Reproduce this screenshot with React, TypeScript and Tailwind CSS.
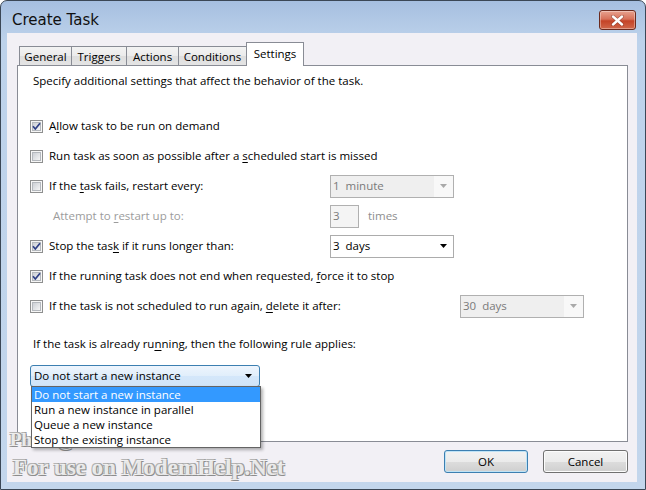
import React from "react";

function CheckBox({ checked = false }: { checked?: boolean }) {
  return (
    <svg width="13" height="13" viewBox="0 0 13 13" className="block shrink-0">
      <defs>
        <linearGradient id="cbg" x1="0" y1="0" x2="1" y2="1">
          <stop offset="0" stopColor="#c9cdd3" />
          <stop offset="1" stopColor="#f7f7f7" />
        </linearGradient>
      </defs>
      <rect x="0.5" y="0.5" width="12" height="12" fill="#f6f6f6" stroke="#8e8f8f" />
      <rect x="2.5" y="2.5" width="8" height="8" fill="url(#cbg)" stroke="#b4b8bd" />
      {checked && (
        <path d="M3 6.3 L5.3 9 L10 3.2" fill="none" stroke="#2e3f85" strokeWidth="1.7" strokeLinejoin="round" />
      )}
    </svg>
  );
}

function U({ children }: { children: React.ReactNode }) {
  return <span className="underline underline-offset-[2px]">{children}</span>;
}

function Arrow({ color }: { color: string }) {
  return (
    <svg width="7" height="4" viewBox="0 0 7 4" className="block">
      <path d="M0 0H7L3.5 4Z" fill={color} />
    </svg>
  );
}

function DisabledCombo({ value }: { value: string }) {
  return (
    <div className="flex h-[23px] w-[124px] shrink-0 border border-[#b0b0b0] bg-[#f8f8f8]">
      <div className="flex h-full w-[103px] items-center whitespace-pre bg-[#efefef] pl-[2px] text-[#7a7a7a]">{value}</div>
      <div className="flex flex-1 items-center justify-center">
        <Arrow color="#a9a9a9" />
      </div>
    </div>
  );
}

function Row({ children }: { children: React.ReactNode }) {
  return <div className="flex h-[30px] items-center pl-[12px]">{children}</div>;
}

export default function App() {
  return (
    <div className="h-[490px] w-[646px] overflow-hidden bg-white">
      <div className="relative flex h-[490px] w-[646px] flex-col rounded-t-[7px] border border-[#3b4756] bg-[linear-gradient(#a6bfe0,#bdd2eb_40px,#c3d6ec)] font-['Open_Sans','Noto_Sans',sans-serif] text-[11.5px] text-black">
        {/* title bar */}
        <div className="flex h-[32px] shrink-0 items-start justify-between pl-[11px] pr-[9px]">
          <div className="mt-[9px] font-['Comic_Sans_MS','DejaVu_Sans',sans-serif] text-[15px] leading-[20px] text-[#101010]">
            Create Task
          </div>
          <div className="mt-[9px] flex h-[20px] w-[37px] items-center justify-center rounded-[3px] border border-[#6b2a1e] bg-[linear-gradient(#e8a28f,#d7715a_45%,#c44327_55%,#d0674a)] shadow-[inset_0_0_0_1px_rgba(255,255,255,0.35)]">
            <svg width="13" height="11" viewBox="0 0 13 11">
              <path d="M2 1.5 L11 9.5 M11 1.5 L2 9.5" stroke="#5a1a10" strokeWidth="3.6" strokeLinecap="round" opacity="0.5" />
              <path d="M2 1.5 L11 9.5 M11 1.5 L2 9.5" stroke="#ffffff" strokeWidth="2.4" strokeLinecap="round" />
            </svg>
          </div>
        </div>

        {/* client area */}
        <div className="ml-[6px] flex h-[449px] w-[630px] shrink-0 flex-col bg-[#f2f0f5] pl-[10px] pt-[10px]">
          {/* tabs */}
          <div className="flex h-[22px] items-end pl-[2px]">
            <div className="flex h-[19px] w-[53px] items-center justify-center border border-b-0 border-[#898c95] bg-[linear-gradient(#f3f3f3,#ebebeb_50%,#dedede_50%,#e4e4e4)] pt-[1px]">General</div>
            <div className="-ml-px flex h-[19px] w-[56px] items-center justify-center border border-b-0 border-[#898c95] bg-[linear-gradient(#f3f3f3,#ebebeb_50%,#dedede_50%,#e4e4e4)] pt-[1px]">Triggers</div>
            <div className="-ml-px flex h-[19px] w-[53px] items-center justify-center border border-b-0 border-[#898c95] bg-[linear-gradient(#f3f3f3,#ebebeb_50%,#dedede_50%,#e4e4e4)] pt-[1px]">Actions</div>
            <div className="-ml-px flex h-[19px] w-[69px] items-center justify-center border border-b-0 border-[#898c95] bg-[linear-gradient(#f3f3f3,#ebebeb_50%,#dedede_50%,#e4e4e4)] pt-[1px]">Conditions</div>
            <div className="relative z-10 -mb-px -ml-px flex h-[24px] w-[58px] items-start justify-center border border-b-0 border-[#898c95] bg-white pt-[2px]">Settings</div>
          </div>

          {/* panel */}
          <div className="relative flex h-[377px] w-[611px] flex-col border border-[#898c95] bg-white">
            <div className="mt-[7px] h-[16px] pl-[15px] leading-[16px]">
              Specify additional settings that affect the behavior of the task.
            </div>

            <div className="mt-[22px] flex flex-col">
              <Row>
                <CheckBox checked />
                <span className="ml-[6px]">A<U>l</U>low task to be run on demand</span>
              </Row>
              <Row>
                <CheckBox />
                <span className="ml-[6px]">Run task as soon as possible after a <U>s</U>cheduled start is missed</span>
              </Row>
              <Row>
                <div className="flex w-[300px] items-center">
                  <CheckBox />
                  <span className="ml-[6px]">If the <U>t</U>ask fails, restart every:</span>
                </div>
                <DisabledCombo value="1  minute" />
              </Row>
              <Row>
                <div className="w-[300px] pl-[23px] text-[#9c9c9c]">
                  Attempt to <U>r</U>estart up to:
                </div>
                <div className="flex h-[23px] w-[29px] items-center border border-[#b0b0b0] bg-[#f4f4f4] pl-[2px] text-[#7a7a7a]">3</div>
                <span className="ml-[9px] text-[#8e8e8e]">times</span>
              </Row>
              <Row>
                <div className="flex w-[300px] items-center">
                  <CheckBox checked />
                  <span className="ml-[6px]">Stop the tas<U>k</U> if it runs longer than:</span>
                </div>
                <div className="flex h-[23px] w-[124px] items-center justify-between border border-[#acacac] bg-white pl-[2px] pr-[6px]">
                  <span className="whitespace-pre">3  days</span>
                  <Arrow color="#000000" />
                </div>
              </Row>
              <Row>
                <CheckBox checked />
                <span className="ml-[6px]">If the running task does not end when requested, <U>f</U>orce it to stop</span>
              </Row>
              <Row>
                <div className="flex w-[430px] items-center">
                  <CheckBox />
                  <span className="ml-[6px]">If the task is not scheduled to run again, <U>d</U>elete it after:</span>
                </div>
                <DisabledCombo value="30  days" />
              </Row>
            </div>

            <div className="mt-[15px] h-[16px] pl-[15px] leading-[16px]">
              If the task is already ru<U>n</U>ning, then the following rule applies:
            </div>

            <div className="relative ml-[12px] mt-[13px] w-[230px]">
              <div className="flex h-[22px] items-center justify-between rounded-[3px] border border-[#3c7fb1] bg-[linear-gradient(#eef5fd,#e0eefb_50%,#d4e7fa_50%,#d0e4f8)] pl-[3px] pr-[7px]">
                <span>Do not start a new instance</span>
                <Arrow color="#000000" />
              </div>
              <div className="absolute left-[1px] top-[21px] z-20 flex w-[230px] flex-col border border-[#646464] bg-white shadow-[2px_2px_3px_rgba(0,0,0,0.3)]">
                <div className="h-[15px] bg-[#3399ff] pl-[2px] leading-[15px] text-white">Do not start a new instance</div>
                <div className="h-[15px] pl-[2px] leading-[15px]">Run a new instance in parallel</div>
                <div className="h-[15px] pl-[2px] leading-[15px]">Queue a new instance</div>
                <div className="h-[15px] pl-[2px] leading-[15px]">Stop the existing instance</div>
              </div>
            </div>
          </div>

          {/* buttons */}
          <div className="mt-[8px] flex w-[611px] justify-end gap-[15px]">
            <div className="flex h-[23px] w-[84px] items-center justify-center rounded-[3px] border border-[#3c7fb1] bg-[linear-gradient(#f2f2f2,#ebebeb_50%,#dddddd_50%,#cfcfcf)] shadow-[inset_0_0_0_1px_#bfe3f6]">OK</div>
            <div className="flex h-[23px] w-[85px] items-center justify-center rounded-[3px] border border-[#707070] bg-[linear-gradient(#f2f2f2,#ebebeb_50%,#dddddd_50%,#cfcfcf)] shadow-[inset_0_0_0_1px_#fcfcfc]">Cancel</div>
          </div>
        </div>

        {/* bottom frame */}
        <div className="h-[7px] shrink-0" />

        {/* watermark, first line lies under the open list */}
        <div className="pointer-events-none absolute left-[9px] top-[428px] z-10 font-['Liberation_Serif',serif] text-[19px] font-bold leading-[22px] text-white/80 [text-shadow:1px_1px_0_#8c8c8c,-1px_-1px_0_#b4b4b4,1px_-1px_0_#a0a0a0,-1px_1px_0_#a0a0a0]">
          Photo@Jimmer
        </div>
        <div className="pointer-events-none absolute left-[12px] top-[454px] z-30 font-['Liberation_Serif',serif] text-[23px] font-bold leading-[26px] text-white/80 [text-shadow:1px_1px_0_#8c8c8c,-1px_-1px_0_#b4b4b4,1px_-1px_0_#a0a0a0,-1px_1px_0_#a0a0a0]">
          For use on ModemHelp.Net
        </div>
      </div>
    </div>
  );
}
